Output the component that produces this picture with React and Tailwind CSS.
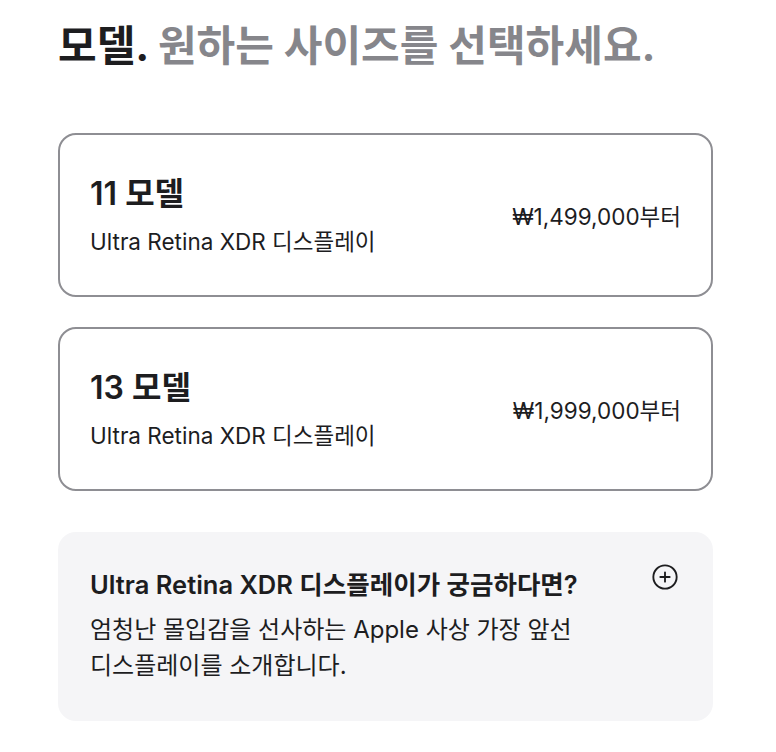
import { CirclePlus } from 'lucide-react'

const models = [
  { name: '11 모델', display: 'Ultra Retina XDR 디스플레이', price: '₩1,499,000부터' },
  { name: '13 모델', display: 'Ultra Retina XDR 디스플레이', price: '₩1,999,000부터' },
]

// Selector de tamaño de modelo con tarjetas y un bloque de información.
export default function App() {
  return (
    <div className="min-h-screen bg-white text-[#1d1d1f] font-['Inter','Noto_Sans_CJK_KR',sans-serif] px-[58px] pt-[22px]">
      <h2 className="text-[42px] leading-[48px] font-bold whitespace-nowrap">
        모델. <span className="text-[#86868b]">원하는 사이즈를 선택하세요.</span>
      </h2>

      <div className="mt-[63px] flex flex-col gap-[30px] w-[655px]">
        {models.map((m) => (
          <div
            key={m.name}
            className="h-[164px] rounded-[18px] border-2 border-[#8e8e93] flex items-center justify-between pl-[30px] pr-[30px]"
          >
            <div className="flex flex-col">
              <span className="text-[32px] leading-[38px] font-semibold">{m.name}</span>
              <span className="mt-[15px] text-[22.5px] leading-[28px]">{m.display}</span>
            </div>
            <span className="text-[22.5px] leading-[28px] mt-[4px]">{m.price}</span>
          </div>
        ))}
      </div>

      <div className="mt-[41px] w-[655px] rounded-[18px] bg-[#f5f5f7] pl-[32px] pr-[34px] pt-[38px] pb-[37px] flex justify-between gap-4">
        <div className="max-w-[540px] break-keep">
          <p className="text-[25.5px] leading-[30px] font-semibold whitespace-nowrap">Ultra Retina XDR 디스플레이가 궁금하다면?</p>
          <p className="mt-[12px] text-[24px] leading-[36px]">
            엄청난 몰입감을 선사하는 Apple 사상 가장 앞선 디스플레이를 소개합니다.
          </p>
        </div>
        <CirclePlus size={28} strokeWidth={1.6} className="shrink-0 -mt-[7px]" />
      </div>
    </div>
  )
}
